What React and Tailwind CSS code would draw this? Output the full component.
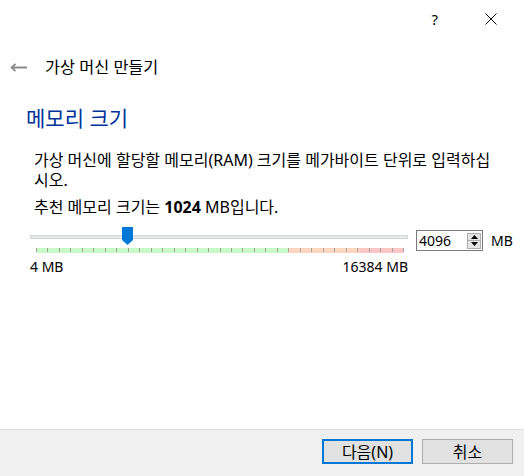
import React from 'react'

const ticks = Array.from({ length: 33 }, (_, i) => i)

function SpinBox({ value }) {
  return (
    <div className="w-[67px] h-[21px] border border-[#7a7a7a] bg-white flex items-center pl-[2px] pr-[1px]">
      <span className="flex-1 text-[14px] leading-[18px] text-black">{value}</span>
      <div className="w-[14px] h-[16px] border border-[#adadad] bg-[#e5e5e5] flex flex-col">
        <div className="flex-1 flex items-center justify-center border-b border-[#adadad]">
          <svg width="7" height="4" viewBox="0 0 7 4"><path d="M0 4 L3.5 0 L7 4 Z" fill="#000" /></svg>
        </div>
        <div className="flex-1 flex items-center justify-center">
          <svg width="7" height="4" viewBox="0 0 7 4"><path d="M0 0 L3.5 4 L7 0 Z" fill="#000" /></svg>
        </div>
      </div>
    </div>
  )
}

function MemorySlider() {
  return (
    <div className="relative w-[378px]">
      {/* thumb */}
      <svg className="absolute left-[92px] top-0" width="11" height="18" viewBox="0 0 11 18">
        <path d="M0 0 H11 V13 L5.5 18 L0 13 Z" fill="#0078d7" />
      </svg>
      <div className="mt-[8px] h-[4px] border border-[#d6d6d6] bg-[#e7eaea]" />
      <div className="relative ml-[6px] mt-[9px] w-[368px] h-[5px] flex">
        <div className="w-[252px] bg-[#c8fac8]" />
        <div className="w-[71px] bg-[#fdd6bf]" />
        <div className="w-[45px] bg-[#ffc6c6]" />
        <div className="absolute inset-x-0 top-0 h-[4px] flex justify-between">
          {ticks.map(i => <div key={i} className="w-px h-full bg-[#a0a0a0]" />)}
        </div>
      </div>
      <div className="mt-[5px] flex justify-between text-[14px] leading-[18px] text-black">
        <span>4 MB</span>
        <span>16384 MB</span>
      </div>
    </div>
  )
}

export default function App() {
  return (
    <div className="w-[524px] h-[476px] bg-white flex flex-col text-black"
      style={{ fontFamily: '"Noto Sans", "Noto Sans CJK KR", sans-serif' }}>
      {/* title bar */}
      <div className="h-[38px] flex items-center justify-end pr-[27px] gap-[47px]">
        <span className="text-[15px] leading-[20px]">?</span>
        <svg width="12" height="12" viewBox="0 0 12 12">
          <path d="M0.5 0.5 L11.5 11.5 M11.5 0.5 L0.5 11.5" stroke="#000" strokeWidth="1" />
        </svg>
      </div>

      {/* back + title */}
      <div className="mt-[19px] h-[20px] flex items-center pl-[10px]">
        <svg width="17" height="9" viewBox="0 0 17 9">
          <path d="M2 4.5 H17" stroke="#8a8a8a" strokeWidth="2" />
          <path d="M5.5 0.8 L1.6 4.5 L5.5 8.2" stroke="#8a8a8a" strokeWidth="1.8" fill="none" />
        </svg>
        <span className="ml-[18px] text-[16.3px] leading-[20px]">가상 머신 만들기</span>
      </div>

      {/* heading */}
      <div className="mt-[27px] pl-[26px] text-[21px] leading-[28px] text-[#003399]">메모리 크기</div>

      {/* body */}
      <div className="mt-[18px] pl-[34px] text-[16px] leading-[20px]">
        <p>가상 머신에 할당할 메모리(RAM) 크기를 메가바이트 단위로 입력하십<br />시오.</p>
        <p className="mt-[7px]">추천 메모리 크기는 <b>1024</b> MB입니다.</p>
      </div>

      {/* slider row */}
      <div className="mt-[10px] pl-[30px] flex items-start">
        <MemorySlider />
        <div className="ml-[8px] mt-[3px] h-[21px] flex items-center">
          <SpinBox value="4096" />
          <span className="ml-[8px] text-[14px] leading-[18px]">MB</span>
        </div>
      </div>

      {/* footer */}
      <div className="mt-auto h-[47px] border-t border-[#dfdfdf] bg-[#f0f0f0] flex justify-end items-start pt-[9px] pr-[11px] gap-[9px]">
        <button className="w-[91px] h-[25px] border-2 border-[#0078d7] bg-[#e1e1e1] text-[16px] leading-[20px] flex items-center justify-center">
          다음(N)
        </button>
        <button className="w-[91px] h-[25px] border border-[#adadad] bg-[#e1e1e1] text-[16px] leading-[20px] flex items-center justify-center">
          취소
        </button>
      </div>
    </div>
  )
}
